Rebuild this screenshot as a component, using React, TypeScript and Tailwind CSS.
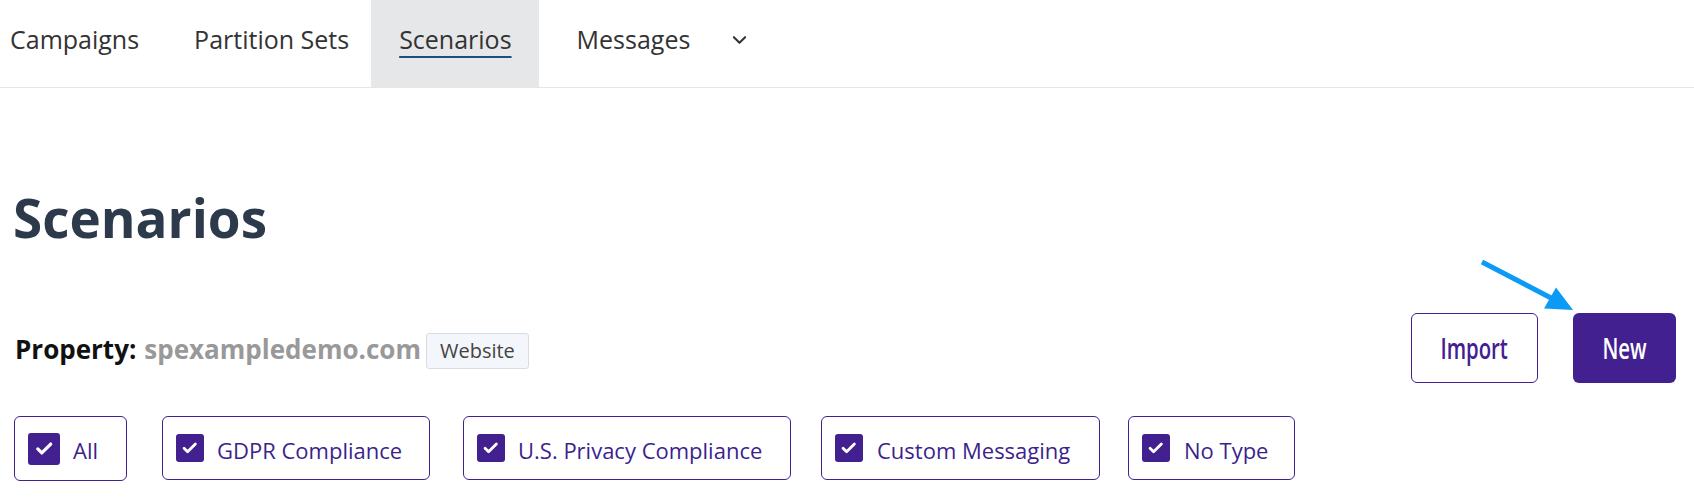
import React from 'react';

const tabs = [
  { label: 'Campaigns', cls: 'pl-[10px] pr-7' },
  { label: 'Partition Sets', cls: 'pl-[27px] pr-[22px]' },
  { label: 'Scenarios', cls: 'pl-7 pr-[27px] bg-[#e6e7e9]', active: true },
  { label: 'Messages', cls: 'pl-[38px] pr-0' },
];

const filters = [
  { label: 'All', box: 'w-[113px] h-[65px] ml-[14px]', check: 'w-8 h-8', text: 'ml-[13px]' },
  { label: 'GDPR Compliance', box: 'w-[268px] h-16 ml-[35px]', check: 'w-7 h-7', text: 'ml-[13px]' },
  { label: 'U.S. Privacy Compliance', box: 'w-[328px] h-16 ml-[33px]', check: 'w-7 h-7', text: 'ml-[13px]' },
  { label: 'Custom Messaging', box: 'w-[279px] h-16 ml-[30px]', check: 'w-7 h-7', text: 'ml-[14px]' },
  { label: 'No Type', box: 'w-[167px] h-16 ml-[28px]', check: 'w-7 h-7', text: 'ml-[14px]' },
];

function Check({ cls }: { cls: string }) {
  return (
    <span className={`${cls} flex items-center justify-center rounded-[3px] bg-[#43208f] shrink-0`}>
      <svg viewBox="0 0 28 28" className="w-[78%] h-[78%]" fill="none">
        <path d="M6.5 14.5l4.5 4.5 10-10" stroke="white" strokeWidth="3.6" strokeLinecap="round" strokeLinejoin="round" />
      </svg>
    </span>
  );
}

export default function App() {
  return (
    <div className="relative w-full min-h-[500px] bg-white text-[#333] font-['Open_Sans',sans-serif]">
      {/* Nav */}
      <nav className="flex h-[88px] border-b border-[#e5e5e5]">
        {tabs.map((t) => (
          <div key={t.label} className={`flex items-center h-[87px] ${t.cls}`}>
            <span
              className={`text-[25px] text-[#333] pb-[8px] ${
                t.active ? 'underline decoration-[#1f4f7d] decoration-2 underline-offset-[7px]' : ''
              }`}
            >
              {t.label}
            </span>
          </div>
        ))}
        <div className="flex items-center h-[87px] pl-[42px] pb-[8px]">
          <svg viewBox="0 0 16 10" className="w-[15px] h-[10px]" fill="none">
            <path d="M2 2l6 6 6-6" stroke="#333" strokeWidth="2.2" strokeLinecap="round" strokeLinejoin="round" />
          </svg>
        </div>
      </nav>

      {/* Heading */}
      <h1 className="pl-[13px] mt-[100px] text-[53px] leading-[60px] font-bold text-[#2c3a4b]">Scenarios</h1>

      {/* Property row */}
      <div className="flex items-center justify-between mt-[65px] h-[70px] pr-[18px]">
        <div className="flex items-center pl-[15px] pt-[2px]">
          <span className="text-[26px] font-bold text-[#111]">Property:</span>
          <span className="text-[26px] font-bold text-[#999] ml-[8px]">spexampledemo.com</span>
          <span className="ml-[5px] mt-[4px] h-9 px-[13px] flex items-center rounded-[3px] border border-[#d8dde3] bg-[#f3f7fb] text-[20px] text-[#444]">
            Website
          </span>
        </div>
        <div className="flex items-center gap-[35px]">
          <button className="w-[127px] h-[70px] flex items-center justify-center rounded-[6px] border border-[#43208f] bg-white text-[#43208f]">
            <span className="inline-block text-[29px] font-semibold scale-x-[0.7]">Import</span>
          </button>
          <button className="w-[103px] h-[70px] flex items-center justify-center rounded-[6px] bg-[#43208f] text-white">
            <span className="inline-block text-[29px] font-semibold scale-x-[0.7]">New</span>
          </button>
        </div>
      </div>

      {/* Filters */}
      <div className="flex items-start mt-[33px]">
        {filters.map((f) => (
          <label
            key={f.label}
            className={`${f.box} flex items-center pl-[13px] rounded-[6px] border border-[#43208f] text-[#3d1f8c] shrink-0`}
          >
            <Check cls={f.check} />
            <span className={`${f.text} text-[22px] pt-[4px]`}>{f.label}</span>
          </label>
        ))}
      </div>

      {/* annotation arrow */}
      <svg className="absolute left-0 top-0 pointer-events-none" width="1694" height="500" fill="none">
        <line x1="1482" y1="262" x2="1553" y2="299" stroke="#0b9bf5" strokeWidth="5" />
        <polygon points="1573,310 1544,308.6 1556,287.4" fill="#0b9bf5" />
      </svg>
    </div>
  );
}
